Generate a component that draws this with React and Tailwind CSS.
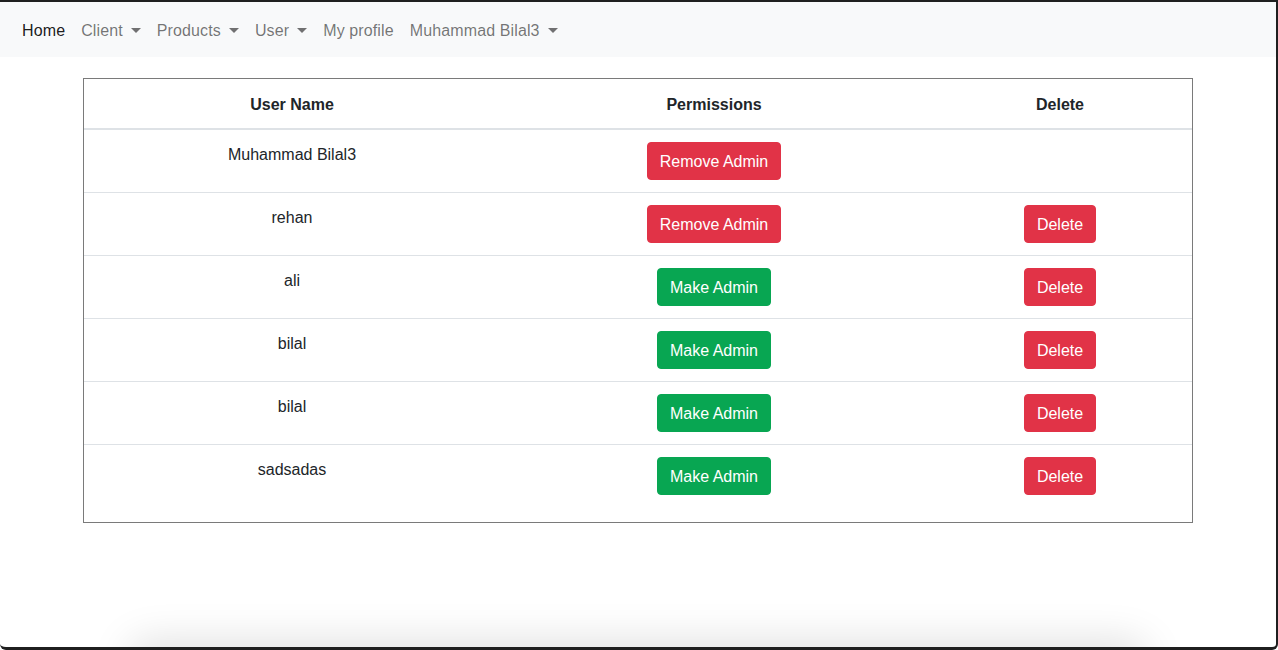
import React from 'react';

const users = [
  { name: 'Muhammad Bilal3', admin: true, canDelete: false },
  { name: 'rehan', admin: true, canDelete: true },
  { name: 'ali', admin: false, canDelete: true },
  { name: 'bilal', admin: false, canDelete: true },
  { name: 'bilal', admin: false, canDelete: true },
  { name: 'sadsadas', admin: false, canDelete: true },
];

function Caret() {
  return (
    <span className="inline-block ml-[8px] align-middle w-0 h-0 border-t-[5px] border-t-current border-x-[5px] border-x-transparent" />
  );
}

function NavItem({ label, active, dropdown }) {
  return (
    <a
      href="#"
      className={`px-2 py-2 flex items-center leading-6 tracking-[0.12px] ${active ? 'text-black/90' : 'text-black/55'}`}
    >
      {label}
      {dropdown && <Caret />}
    </a>
  );
}

function Btn({ kind, children }) {
  const color = kind === 'danger' ? 'bg-[#e13347] border-[#e13347]' : 'bg-[#08a652] border-[#08a652]';
  return (
    <button className={`${color} text-white border rounded-[4px] px-3 pt-[7px] pb-[5px] leading-6 text-base`}>
      {children}
    </button>
  );
}

export default function App() {
  return (
    <div
      className="h-[650px] w-full flex flex-col overflow-hidden bg-white border-t-2 border-r-2 border-b-[3px] border-l-0 border-[#1f1f1f] rounded-bl-[6px] rounded-br-[6px] text-[#212529] text-base"
      style={{ fontFamily: '"Liberation Sans", Arial, sans-serif' }}
    >
      <nav className="h-[55px] shrink-0 bg-[#f8f9fa] flex items-center px-[14px] pt-[2px]">
        <NavItem label="Home" active />
        <NavItem label="Client" dropdown />
        <NavItem label="Products" dropdown />
        <NavItem label="User" dropdown />
        <NavItem label="My profile" />
        <NavItem label="Muhammad Bilal3" dropdown />
      </nav>

      <div className="mt-[21px] mx-auto w-[1110px] border border-[#7a7a7a] pb-[15px]">
        <div className="grid grid-cols-[416px_428px_264px] border-b-2 border-[#dee2e6] font-bold leading-6 text-center pt-[14px] pb-[11px]">
          <div>User Name</div>
          <div>Permissions</div>
          <div>Delete</div>
        </div>
        {users.map((u, i) => (
          <div
            key={i}
            className={`grid grid-cols-[416px_428px_264px] items-start text-center py-3 leading-6 ${
              i < users.length - 1 ? 'border-b border-[#dee2e6]' : ''
            }`}
          >
            <div className="pt-[1px]">{u.name}</div>
            <div>
              {u.admin ? <Btn kind="danger">Remove Admin</Btn> : <Btn kind="success">Make Admin</Btn>}
            </div>
            <div>{u.canDelete && <Btn kind="danger">Delete</Btn>}</div>
          </div>
        ))}
      </div>

      <div className="mt-auto mb-[-40px] shrink-0 mx-auto w-[1020px] h-[40px] rounded-[20px] shadow-[0_-6px_40px_rgba(0,0,0,0.13)]" />
    </div>
  );
}
